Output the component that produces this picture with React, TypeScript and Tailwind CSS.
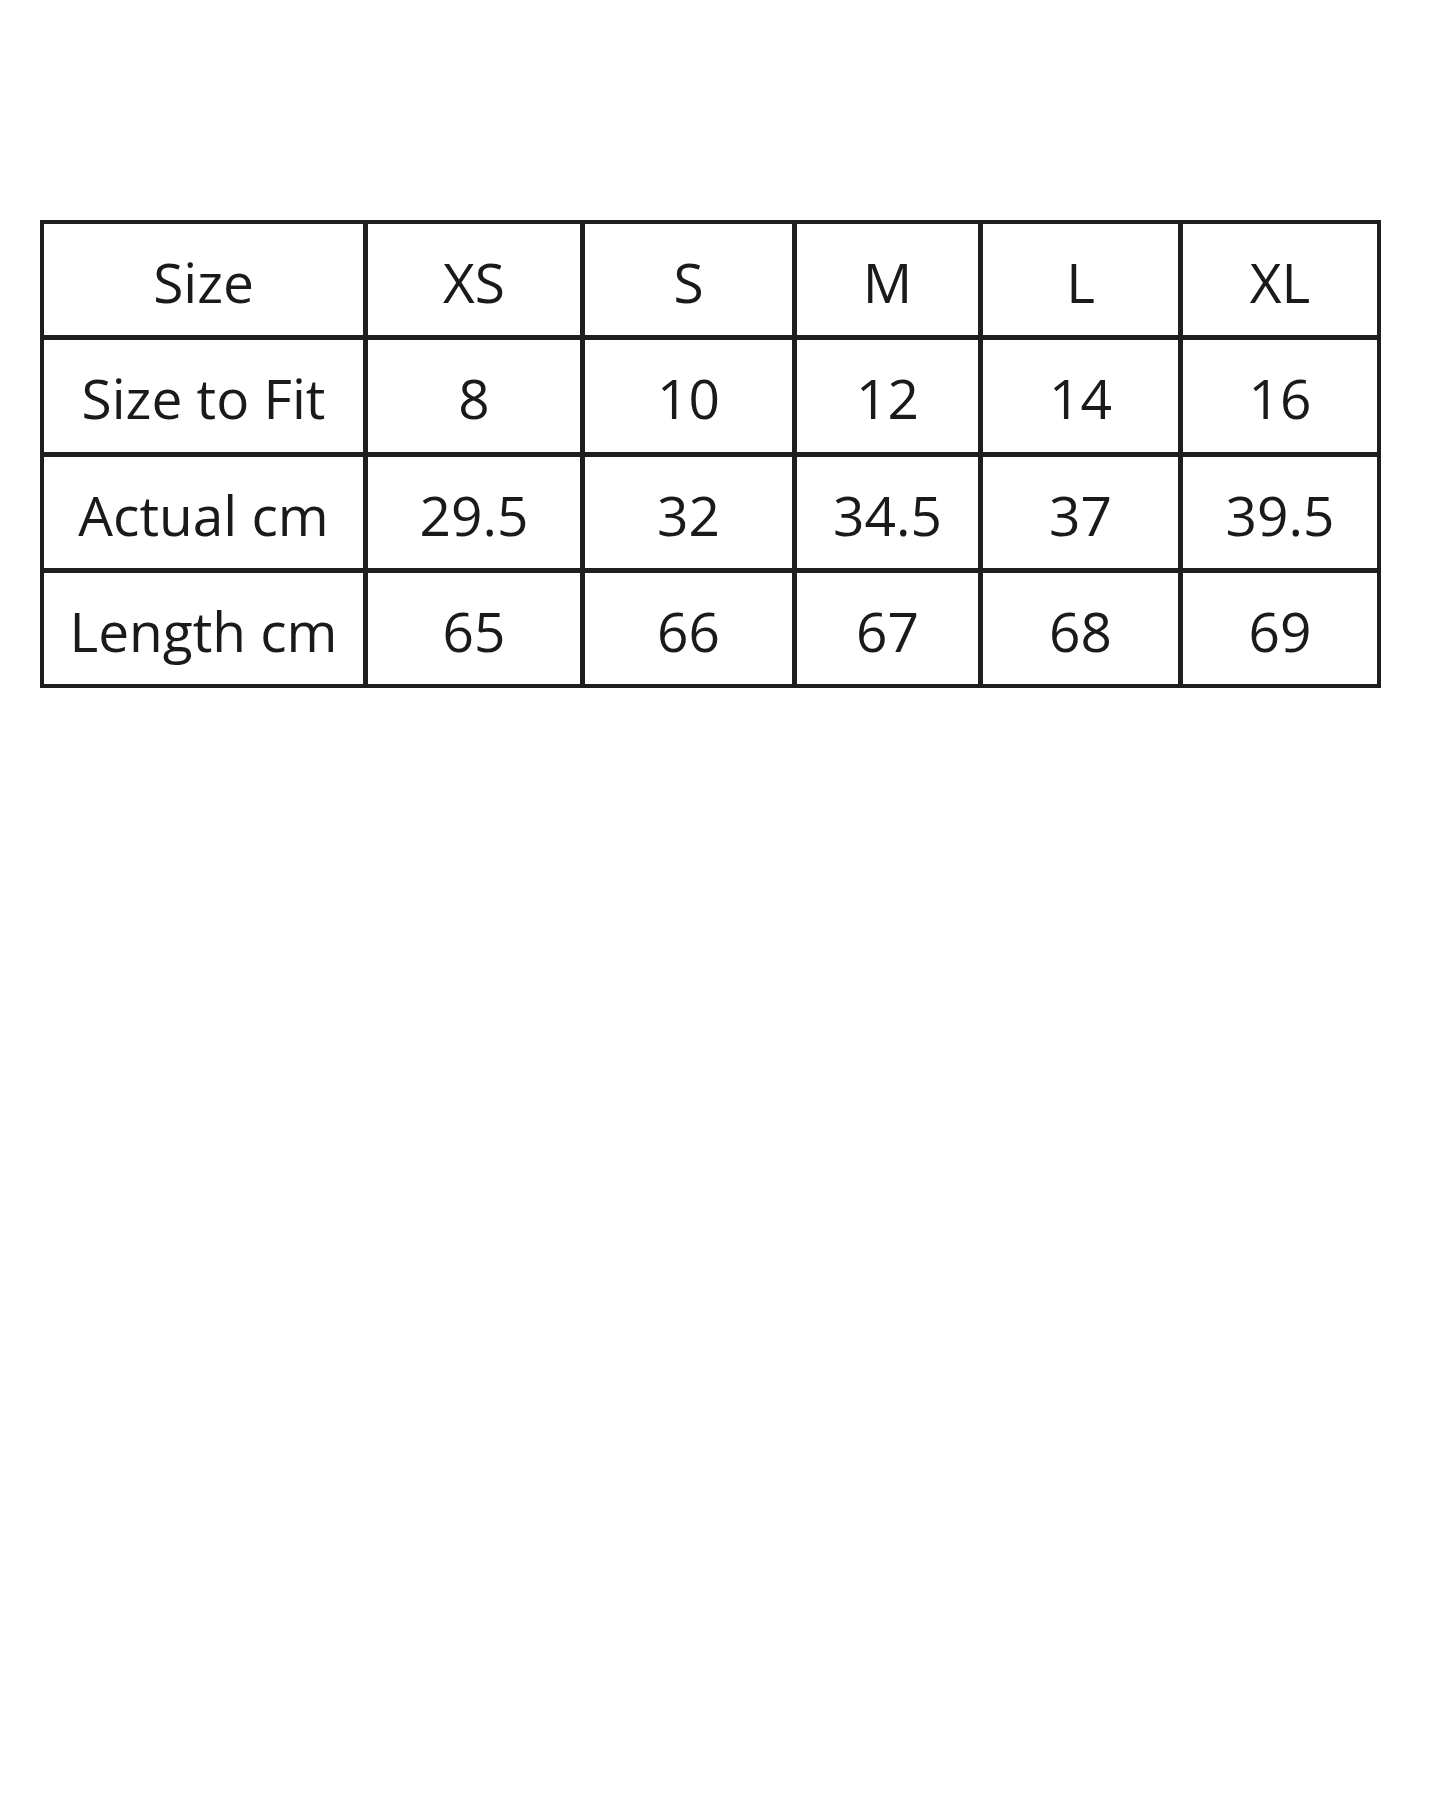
const rows: string[][] = [
  ["Size", "XS", "S", "M", "L", "XL"],
  ["Size to Fit", "8", "10", "12", "14", "16"],
  ["Actual cm", "29.5", "32", "34.5", "37", "39.5"],
  ["Length cm", "65", "66", "67", "68", "69"],
];

export default function App() {
  return (
    <div className="min-h-[1800px] w-[1440px] bg-white pt-[220px] pl-[40px]">
      <div
        className="grid w-fit grid-cols-[319px_212px_207px_181px_195px_194px] grid-rows-[111px_112px_111px_111px] gap-[5px] bg-[#1e1e1e] p-[4px]"
        style={{ fontFamily: '"Open Sans", "Noto Sans", sans-serif' }}
      >
        {rows.flatMap((row, r) =>
          row.map((cell, c) => (
            <div
              key={`${r}-${c}`}
              className="flex items-center justify-center bg-white pt-[3px] text-[55px] leading-none text-[#1a1a1a]"
            >
              {cell}
            </div>
          )),
        )}
      </div>
    </div>
  );
}
